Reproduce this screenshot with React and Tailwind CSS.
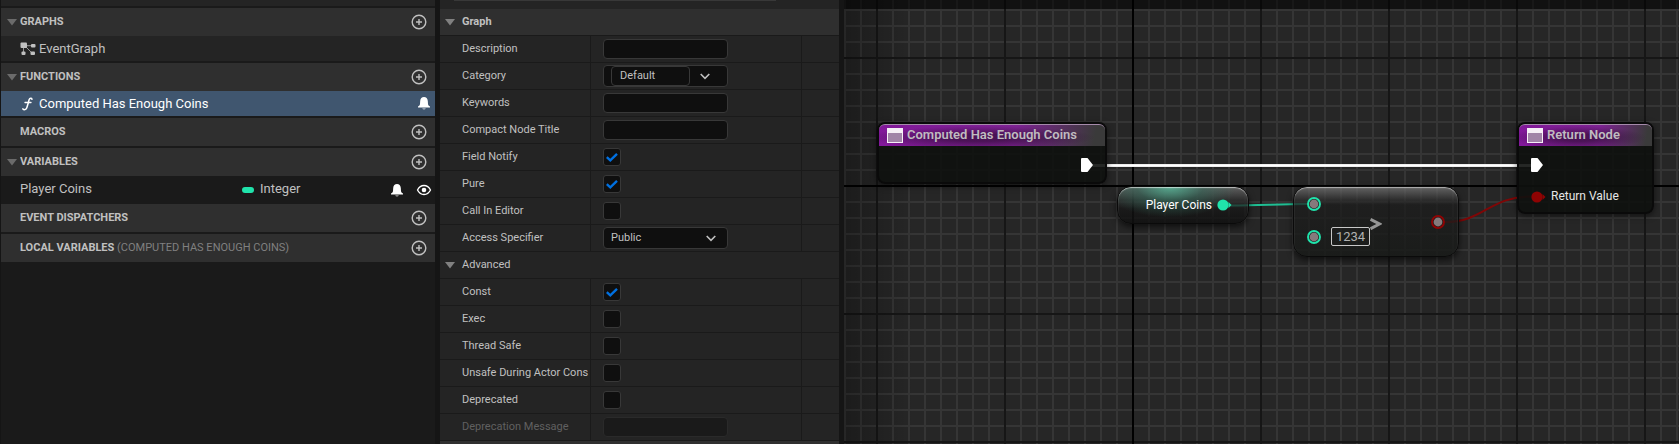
import React from "react";

function Triangle({ open = true }) {
  return (
    <svg viewBox="0 0 10 7" className={open ? "h-[7px] w-[10px] shrink-0" : "invisible h-[7px] w-[10px] shrink-0"} aria-hidden="true">
      <path d="M0 0h10L5 6.5z" fill="currentColor" />
    </svg>
  );
}

function PlusCircle() {
  return (
    <svg viewBox="0 0 16 16" className="size-4" fill="none" stroke="currentColor" strokeWidth="1.4" aria-hidden="true">
      <circle cx="8" cy="8" r="6.8" />
      <path d="M8 5v6M5 8h6" />
    </svg>
  );
}

function Bell() {
  return (
    <svg viewBox="0 0 12 13" className="h-[13px] w-3 text-white" fill="currentColor" aria-hidden="true">
      <path d="M6 0C3.8 0 2.4 1.6 2.2 4L2 7C1.9 8.300 1.200 8.900 0 9.600V10.500H12V9.600C10.800 8.900 10.100 8.300 10 7L9.800 4C9.600 1.600 8.200 0 6 0z" />
      <path d="M4.300 11.300h3.400C7.400 12.300 6.800 12.600 6 12.600s-1.400-.3-1.700-1.300z" opacity="0.6" />
    </svg>
  );
}

function Eye() {
  return (
    <svg viewBox="0 0 16 12" className="h-3 w-4 text-white" aria-hidden="true">
      <path d="M1.500 6C3 3 5.300 1.500 8 1.500S13 3 14.500 6C13 9 10.700 10.500 8 10.500S3 9 1.500 6z" fill="none" stroke="currentColor" strokeWidth="1.300" />
      <circle cx="8" cy="6" r="2.300" fill="currentColor" />
    </svg>
  );
}

function GraphIcon() {
  return (
    <svg viewBox="0 0 16 14" className="h-[14px] w-4 text-[#c0c0c0]" fill="currentColor" aria-hidden="true">
      <rect x="0.500" y="0.500" width="6.500" height="5.500" rx="1" />
      <rect x="11" y="2" width="4.500" height="3.500" rx="1" />
      <rect x="1.500" y="9.500" width="4" height="3.500" rx="1" />
      <rect x="10.500" y="9.500" width="4.500" height="3.500" rx="1" />
      <path d="M6 3.700h6M3.500 5v5M5.500 4.500l6.500 6.500" fill="none" stroke="currentColor" strokeWidth="0.900" opacity="0.800" />
    </svg>
  );
}

function FunctionIcon() {
  return (
    <svg viewBox="0 0 16 14" className="h-[14px] w-4 text-white" fill="none" stroke="currentColor" strokeLinecap="round" aria-hidden="true">
      <path d="M12 2.300C11.600 1 9.800 1 9.200 2.600C8.600 4.500 7.600 8.500 6.800 10.700C6.100 12.700 4 13.200 2.900 11.900" strokeWidth="1.500" />
      <path d="M5 5.500h6" strokeWidth="1.300" />
    </svg>
  );
}

function Chevron() {
  return (
    <svg viewBox="0 0 10 7" className="h-[7px] w-[10px]" fill="none" stroke="currentColor" strokeWidth="1.600" aria-hidden="true">
      <path d="M0.700 1L5 5.300L9.300 1" />
    </svg>
  );
}

function Section({ title, note, open = false, children }) {
  return (
    <section>
      <header className="flex h-7 items-center bg-[#2f2f2f] pr-2 pl-[6px] text-[#6b6b6b]">
        <Triangle open={open} />
        <h2 className="ml-[3px] flex-1 truncate text-[11px] font-bold text-[#c0c0c0]">
          {title}
          {note && <span className="font-normal text-[#808080]"> {note}</span>}
        </h2>
        <button type="button" aria-label={"Add to " + title} className="text-[#c0c0c0]">
          <PlusCircle />
        </button>
      </header>
      {children}
    </section>
  );
}

function BlueprintPanel() {
  return (
    <aside className="flex flex-col border-l border-[#151515] bg-[#1a1a1a]">
      <div className="mb-[2px] h-[6px] bg-[#242424]" />
      <div className="flex flex-col gap-[2px]">
        <Section title="GRAPHS" open>
          <div className="flex h-[25px] items-center bg-[#242424] pl-[19px] text-[13px] text-[#c0c0c0]">
            <GraphIcon />
            <span className="ml-[3px]">EventGraph</span>
          </div>
        </Section>
        <Section title="FUNCTIONS" open>
          <div className="flex h-[25px] items-center bg-[#40566f] pr-[5px] pl-[19px] text-[13px] text-white">
            <FunctionIcon />
            <span className="ml-[3px] flex-1 truncate">Computed Has Enough Coins</span>
            <button type="button" aria-label="Field notify">
              <Bell />
            </button>
          </div>
        </Section>
        <Section title="MACROS" />
        <div>
          <Section title="VARIABLES" open>
            <div className="flex h-7 items-center pr-[3px] pl-[19px] text-[13px] text-[#c0c0c0]">
              <span className="basis-[222px] truncate pb-[2px]">Player Coins</span>
              <span className="h-[6px] w-3 rounded-full bg-[#20e3ab]" />
              <span className="ml-[6px] flex-1 pb-[2px]">Integer</span>
              <button type="button" aria-label="Toggle field notify" className="mr-[13px]">
                <Bell />
              </button>
              <button type="button" aria-label="Toggle visibility">
                <Eye />
              </button>
            </div>
          </Section>
          <Section title="EVENT DISPATCHERS" />
        </div>
        <Section title="LOCAL VARIABLES" note="(COMPUTED HAS ENOUGH COINS)" />
      </div>
    </aside>
  );
}

function Property({ id, label, disabled = false, children }) {
  return (
    <div className="grid h-[27px] grid-cols-[150px_minmax(0,211fr)_minmax(0,38fr)] border-t border-[#1a1a1a]">
      <label
        htmlFor={id}
        className={
          disabled
            ? "flex items-center overflow-hidden pl-[22px] whitespace-nowrap text-[#606060]"
            : "flex items-center overflow-hidden pl-[22px] whitespace-nowrap text-[#c0c0c0]"
        }
      >
        {label}
      </label>
      <div className="flex items-center border-l border-[#1a1a1a] pl-3">{children}</div>
      <div className="border-l border-[#1a1a1a]" />
    </div>
  );
}

function TextProperty({ id, label, disabled = false }) {
  return (
    <Property id={id} label={label} disabled={disabled}>
      <input
        id={id}
        type="text"
        disabled={disabled}
        className="h-5 w-[125px] rounded border border-[#383838] bg-[#0f0f0f] px-2 outline-none disabled:border-[#2a2a2a] disabled:bg-[#1a1a1a]"
      />
    </Property>
  );
}

function CheckProperty({ id, label, checked = false }) {
  return (
    <Property id={id} label={label}>
      <span className="grid size-[18px] place-items-center">
        <input
          id={id}
          type="checkbox"
          defaultChecked={checked}
          className="peer col-start-1 row-start-1 size-[18px] appearance-none rounded-[3px] border border-[#383838] bg-[#0f0f0f]"
        />
        <svg viewBox="0 0 12 9" className="pointer-events-none invisible col-start-1 row-start-1 h-[9px] w-3 peer-checked:visible" fill="none" stroke="#0070e0" strokeWidth="2.400" aria-hidden="true">
          <path d="M0.800 4.200L4.300 7.300L11 0.900" />
        </svg>
      </span>
    </Property>
  );
}

function DetailsPanel() {
  return (
    <main className="flex flex-col bg-[#242424] text-[11px]">
      <div className="h-[9px] pl-[14px]">
        <div className="h-px w-[322px] bg-[#383838]" />
      </div>
      <div className="flex h-[26px] items-center bg-[#2f2f2f] pl-[5px] text-[#808080]">
        <Triangle />
        <h2 className="ml-[7px] pb-px font-bold text-[#c0c0c0]">Graph</h2>
      </div>
      <TextProperty id="description" label="Description" />
      <Property id="category" label="Category">
        <div className="flex h-[22px] w-[125px] items-center rounded border border-[#383838] bg-[#0f0f0f] pl-[7px] text-[#c0c0c0]">
          <input
            id="category"
            type="text"
            defaultValue="Default"
            className="h-5 w-[79px] rounded border border-[#383838] bg-[#0f0f0f] px-2 pb-[2px] outline-none"
          />
          <button type="button" aria-label="Choose category" className="ml-[10px]">
            <Chevron />
          </button>
        </div>
      </Property>
      <TextProperty id="keywords" label="Keywords" />
      <TextProperty id="compact-title" label="Compact Node Title" />
      <CheckProperty id="field-notify" label="Field Notify" checked />
      <CheckProperty id="pure" label="Pure" checked />
      <CheckProperty id="call-in-editor" label="Call In Editor" />
      <Property id="access" label="Access Specifier">
        <div className="grid items-center text-[#c0c0c0]">
          <select
            id="access"
            defaultValue="Public"
            className="col-start-1 row-start-1 h-[22px] w-[125px] appearance-none rounded border border-[#383838] bg-[#0f0f0f] pl-[7px] outline-none"
          >
            <option>Public</option>
            <option>Protected</option>
            <option>Private</option>
          </select>
          <span className="pointer-events-none col-start-1 row-start-1 mr-3 justify-self-end">
            <Chevron />
          </span>
        </div>
      </Property>
      <div className="flex h-[27px] items-center border-t border-[#1a1a1a] pl-[5px] text-[#808080]">
        <Triangle />
        <h3 className="ml-[7px] text-[#c0c0c0]">Advanced</h3>
      </div>
      <CheckProperty id="const" label="Const" checked />
      <CheckProperty id="exec" label="Exec" />
      <CheckProperty id="thread-safe" label="Thread Safe" />
      <CheckProperty id="unsafe" label="Unsafe During Actor Cons" />
      <CheckProperty id="deprecated" label="Deprecated" />
      <TextProperty id="deprecation-message" label="Deprecation Message" disabled />
      <div className="min-h-[3px] flex-1 border-t border-[#1a1a1a] bg-[#2f2f2f]" />
    </main>
  );
}

function GridAndWires() {
  return (
    <svg className="absolute inset-0 size-full" aria-hidden="true">
      <defs>
        <pattern id="minor" width="16" height="16" y="9" patternUnits="userSpaceOnUse">
          <path d="M0 0h16v2H2v14H0z" fill="#353535" />
        </pattern>
        <pattern id="major" width="128" height="128" x="32" y="57" patternUnits="userSpaceOnUse">
          <path d="M0 0h128v2H2v126H0z" fill="#161616" />
        </pattern>
        <linearGradient id="edge">
          <stop offset="0" stopColor="#000" stopOpacity="0.28" />
          <stop offset="1" stopColor="#000" stopOpacity="0" />
        </linearGradient>
      </defs>
      <rect width="100%" height="100%" fill="#262626" />
      <rect width="100%" height="100%" fill="url(#minor)" />
      <rect width="100%" height="100%" fill="url(#major)" />
      <rect x="288" width="2" height="100%" fill="#000" />
      <rect y="185" width="100%" height="2" fill="#000" />
      <rect width="70" height="100%" fill="url(#edge)" />
      <rect width="100%" height="9" fill="#000" opacity="0.550" />
      <path d="M247 165.500H690" stroke="#e8e8e8" strokeWidth="3" />
      <path d="M247 165.500H690" stroke="#fff" strokeWidth="1.500" />
      <path d="M386 205.500C420 205.500 430 204 464 204" stroke="#1fbf93" strokeWidth="2" fill="none" />
      <path d="M601 222C640 222 645 196.500 688 196.500" stroke="#7f0606" strokeWidth="2" fill="none" />
    </svg>
  );
}

function ExecPin() {
  return (
    <svg viewBox="0 0 12 14" className="h-[14px] w-3" aria-hidden="true">
      <path d="M1 0h5.500L12 7l-5.500 7H1q-1 0-1-1V1q0-1 1-1z" fill="#fff" />
    </svg>
  );
}

function FilledPin({ color }) {
  return (
    <svg viewBox="0 0 15 12" className="h-3 w-[15px]" fill={color} aria-hidden="true">
      <circle cx="6" cy="6" r="5.600" />
      <path d="M11.500 3l3 3l-3 3z" />
    </svg>
  );
}

function RingPin({ color }) {
  return (
    <svg viewBox="0 0 14 14" className="size-[14px]" aria-hidden="true">
      <circle cx="7" cy="7" r="6" fill="#1a1a1a" stroke={color} strokeWidth="1.900" />
      <circle cx="7" cy="7" r="4.400" fill="#857a7c" />
    </svg>
  );
}

function NodeHeader({ title }) {
  return (
    <header className="flex h-[22px] items-center rounded-t-[6px] border-t border-[#a58aaa] bg-[radial-gradient(ellipse_at_45%_60%,rgba(40,10,45,0.6)_20%,rgba(40,10,45,0)_65%),linear-gradient(100deg,#82189a_0%,#7d2292_60%,#3a3a3a_95%)] pl-2">
      <svg viewBox="0 0 16 15" className="mb-px h-[15px] w-4" aria-hidden="true">
        <rect width="16" height="15" fill="#f6eff7" />
        <rect x="1" y="5" width="14" height="9" fill="#a184a8" />
      </svg>
      <h2 className="ml-1 pb-px text-[13px] font-semibold whitespace-nowrap text-[#c0bcc0]">{title}</h2>
    </header>
  );
}

function GraphCanvas() {
  return (
    <section className="relative overflow-hidden bg-[#262626]" aria-label="Graph">
      <GridAndWires />

      <article className="absolute top-[122px] left-[33px] h-[62px] w-[230px] rounded-lg border-2 border-[#0a0a0a] bg-[#0e110e]/90 shadow-[0_2px_6px_rgba(0,0,0,0.5)]">
        <NodeHeader title="Computed Has Enough Coins" />
        <div className="flex justify-end pt-3 pr-3">
          <ExecPin />
        </div>
      </article>

      <article className="absolute top-[186px] left-[273px] flex h-[38px] w-[132px] items-center justify-end gap-[5px] rounded-[14px] border border-[#0a0a0a] bg-[radial-gradient(ellipse_at_40%_0%,rgba(85,180,150,0.85)_0%,rgba(50,110,92,0.5)_30%,rgba(50,110,92,0)_60%),linear-gradient(180deg,rgba(101,101,101,0.9)_0%,rgba(48,48,48,0.8)_35%,rgba(22,22,22,0.7)_60%,rgba(16,16,16,0.85)_100%)] pr-4 shadow-[inset_0_1px_1px_rgba(255,255,255,0.6),0_3px_6px_rgba(0,0,0,0.6)]">
        <span className="pb-px text-[12px] whitespace-nowrap text-white">Player Coins</span>
        <FilledPin color="#20e3ab" />
      </article>

      <article className="absolute top-[186px] left-[449px] flex h-[71px] w-[166px] items-start rounded-[14px] border border-[#0a0a0a] bg-[linear-gradient(180deg,rgba(120,120,120,0.75)_0%,rgba(50,50,50,0.7)_18%,rgba(28,28,28,0.75)_26%,rgba(24,26,24,0.85)_100%)] px-[13px] shadow-[inset_0_1px_1px_rgba(255,255,255,0.5),0_3px_6px_rgba(0,0,0,0.6)]">
        <div className="flex flex-col gap-[19px] pt-[10px]">
          <RingPin color="#20e3ab" />
          <RingPin color="#20e3ab" />
        </div>
        <input
          aria-label="Compared value"
          defaultValue="1234"
          className="mt-10 ml-[10px] h-[19px] w-[39px] rounded-[2px] border border-[#c8c8c8] bg-transparent text-center text-[13px] text-[#b0b0b0] outline-none"
        />
        <svg viewBox="0 0 12 12" className="mt-[31px] size-3" fill="none" stroke="#969696" strokeWidth="3" aria-label="Greater than">
          <path d="M0.500 1.400L9.500 6L0.500 10.800" />
        </svg>
        <div className="ml-auto pt-7">
          <RingPin color="#8f0303" />
        </div>
      </article>

      <article className="absolute top-[122px] left-[673px] h-[92px] w-[137px] rounded-lg border-2 border-[#0a0a0a] bg-[#0e110e]/90 shadow-[0_2px_6px_rgba(0,0,0,0.5)]">
        <NodeHeader title="Return Node" />
        <div className="flex flex-col pt-3 pl-3">
          <ExecPin />
          <div className="mt-4 flex items-center gap-[5px]">
            <FilledPin color="#8f0303" />
            <span className="pb-px text-[12px] whitespace-nowrap text-[#e6e6e6]">Return Value</span>
          </div>
        </div>
      </article>
    </section>
  );
}

export default function App() {
  return (
    <div className="grid min-h-screen grid-cols-[minmax(0,435fr)_minmax(0,399fr)_minmax(0,835fr)] gap-[5px] bg-[#151515] font-[Roboto,sans-serif] leading-4 antialiased">
      <BlueprintPanel />
      <DetailsPanel />
      <GraphCanvas />
    </div>
  );
}
